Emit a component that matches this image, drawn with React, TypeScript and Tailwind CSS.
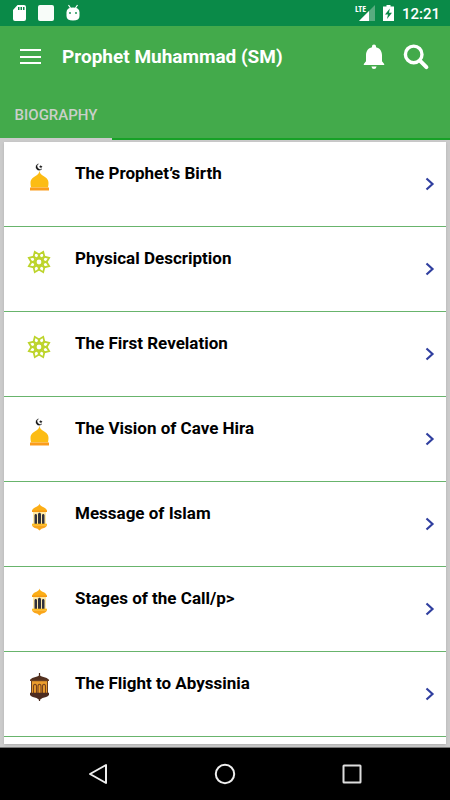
import React from "react";

type IconKind = "dome" | "rosette" | "lantern" | "darkLantern";

const topics: { title: string; icon: IconKind }[] = [
  { title: "The Prophet’s Birth", icon: "dome" },
  { title: "Physical Description", icon: "rosette" },
  { title: "The First Revelation", icon: "rosette" },
  { title: "The Vision of Cave Hira", icon: "dome" },
  { title: "Message of Islam", icon: "lantern" },
  { title: "Stages of the Call/p>", icon: "lantern" },
  { title: "The Flight to Abyssinia", icon: "darkLantern" },
];

const petals = [0, 45, 90, 135, 180, 225, 270, 315];

function Dome() {
  return (
    <svg viewBox="0 0 28 28" className="size-7 shrink-0" aria-hidden="true">
      <path d="M13.500 .8A3.300 3.300 0 1 0 17 5.800 2.800 2.800 0 1 1 13.500.8Z" fill="#111" stroke="#111" strokeWidth=".3" />
      <path d="m15.800 2 .5 1 1.200.1-.9.800.2 1.200-1-.6-1.100.6.3-1.200-.9-.800 1.200-.1Z" fill="#222" />
      <path d="M14.500 7.500c.3 2.300.9 3.500 2.800 4.700 3.200 2 6.200 3.500 6.200 7.800 0 1.700-.2 3-.6 4.500H6.100c-.4-1.500-.6-2.800-.6-4.500 0-4.300 3-5.800 6.200-7.800 1.900-1.200 2.500-2.400 2.800-4.700Z" fill="#fcbc14" />
      <path d="M5 24.500h19v3H5z" fill="#fb9c1c" />
    </svg>
  );
}

function Rosette() {
  return (
    <svg viewBox="0 0 28 28" className="size-7 shrink-0" aria-hidden="true" fill="none" stroke="#bdd42c">
      {petals.map((angle) => (
        <path key={angle} d="M14 10.200 10.900 7.200l3.100-4.200 3.100 4.200Z" strokeWidth="1.800" transform={`rotate(${angle + 22.5} 14 14)`} />
      ))}
      <circle cx="14" cy="14" r="3.600" strokeWidth="2.400" />
    </svg>
  );
}

function Lantern() {
  return (
    <svg viewBox="0 0 28 28" className="size-7 shrink-0" aria-hidden="true">
      <path d="M14.500 0.500c.3 1.600 1 2.200 3 3.200 2.800 1.100 4 2.200 4.500 4.300H7c.5-2.100 1.700-3.200 4.500-4.300 2-1 2.700-1.600 3-3.200Z" fill="#fcae16" />
      <path d="M7 7.500h15V9H7z" fill="#f49a12" />
      <path d="M8 9h13v12H8z" fill="#ffe9a6" />
      <path d="M9.500 21v-8.500c0-2 2.500-2 2.500 0V21Zm3.500 0v-9.500c0-2.300 3-2.300 3 0V21Zm4 0v-8.500c0-2 2.500-2 2.500 0V21Z" fill="#30313c" />
      <path d="M7 20.700h15v2H7z" fill="#fdbb1d" />
      <path d="M7 22.500h15c-1 2-3.100 2.700-5.500 3.300l-2 1.700-2-1.700C10.100 25.200 8 24.500 7 22.500Z" fill="#faa61a" />
    </svg>
  );
}

function DarkLantern() {
  return (
    <svg viewBox="0 0 28 28" className="size-7 shrink-0" aria-hidden="true">
      <path d="M14.500 0v4m0 20v4" stroke="#49281c" strokeWidth="1.200" />
      <path d="M14.500 1.500c.5 1.500 1.500 2 4 2.400 2.200.5 4.500 1.400 5.500 3.100H5c1-1.700 3.300-2.600 5.500-3.100 2.500-.4 3.500-.9 4-2.400Z" fill="#52301f" />
      <path d="M5 6.700h19V8H5zM6 8h17v12.500H6z" fill="#6a3f22" />
      <path d="M7 8.200h15V20H7z" fill="#ec9d2c" />
      <path d="M8.500 20v-6.500c0-3 3-3 3 0V20m1.500 0v-6.500c0-3 3-3 3 0V20m1.500 0v-6.500c0-3 3-3 3 0V20" fill="none" stroke="#7a431c" strokeWidth="1.100" />
      <path d="M5 19.800h19v2.300c-1.500 1.700-4 2.600-6.500 3l-3 1.900-3-1.900C9 24.700 6.500 23.800 5 22.100Z" fill="#4d2c20" />
    </svg>
  );
}

function TopicIcon({ kind }: { kind: IconKind }) {
  if (kind === "dome") return <Dome />;
  if (kind === "rosette") return <Rosette />;
  if (kind === "lantern") return <Lantern />;
  return <DarkLantern />;
}

function StatusBar() {
  return (
    <div className="flex h-[26px] shrink-0 items-center bg-[#0a8a48] pl-3 pr-2.5 text-white">
      <svg viewBox="0 0 14 16" className="h-4 w-3.5" aria-hidden="true">
        <path fillRule="evenodd" fill="#fff" d="M5.500 0H12q2 0 2 2v12q0 2-2 2H3q-2 0-2-2V5ZM6 2v3h1.500V2Zm2.500 0v3H10V2ZM11 2v3h1.500V2Z" />
      </svg>
      <div className="ml-3 size-4 rounded-xs bg-[#f8fcf9]" />
      <svg viewBox="0 0 14 18" className="ml-3 h-[18px] w-3.5" aria-hidden="true">
        <path d="m2.500 1 2 3m7-3-2 3" stroke="#fff" strokeWidth="1.200" />
        <path d="M.5 8.500Q.5 3.500 7 3.500t6.500 5V12q0 4.500-6.500 4.500T.5 12Z" fill="#fff" />
        <circle cx="4" cy="9" r=".9" fill="#0a8a48" />
        <circle cx="10" cy="9" r=".9" fill="#0a8a48" />
      </svg>
      <svg viewBox="0 0 24 26" className="ml-auto h-[26px] w-6" aria-label="LTE signal">
        <path d="M24 5v16H8Z" fill="#58ac80" />
        <path d="M18 11v10H8Z" fill="#fff" />
        <path d="M4 4h12v9H4z" fill="#0a8a48" />
        <text x="4" y="12" fill="#fff" fontSize="9" fontWeight="700" className="font-['Open_Sans_Condensed','Liberation_Sans_Narrow',sans-serif]">LTE</text>
      </svg>
      <svg viewBox="0 0 11 16" className="ml-2 h-4 w-[11px]" aria-hidden="true">
        <path d="M3.500 0h4v1.500H11V16H0V1.500h3.500Z" fill="#fff" />
        <path d="M6.800 3.500 2 9.500h3l-1 4.500 5-6.200H6Z" fill="#0a8a48" />
      </svg>
      <span className="ml-2 pt-0.5 text-[15px] leading-none font-medium">12:21</span>
    </div>
  );
}

function Toolbar() {
  return (
    <header className="flex h-[62px] shrink-0 items-center pl-[18px] pr-5 text-white">
      <button type="button" aria-label="Open menu" className="size-6">
        <svg viewBox="0 0 24 24" className="size-6" stroke="#fff" strokeWidth="2" aria-hidden="true">
          <path d="M2 5h21M2 12h21M2 18h21" />
        </svg>
      </button>
      <h1 className="ml-5 flex-1 truncate text-[19px] leading-6 font-bold">Prophet Muhammad (SM)</h1>
      <button type="button" aria-label="Notifications" className="size-7">
        <svg viewBox="0 0 28 28" className="size-7" fill="#fff" aria-hidden="true">
          <path d="M14 1.500c1.200 0 2 .8 2 2v.7c3.900.9 6 4 6 8v6l2.200 2.700V22H3.800v-1.100L6 18.200v-6c0-4 2.100-7.100 6-8v-.7c0-1.200.8-2 2-2ZM11.400 23.500h5.200q-.5 2.500-2.600 2.500t-2.600-2.500Z" />
        </svg>
      </button>
      <button type="button" aria-label="Search" className="ml-3.5 size-7">
        <svg viewBox="0 0 28 28" className="size-7" fill="none" stroke="#fff" aria-hidden="true">
          <circle cx="11.700" cy="11.400" r="8.300" strokeWidth="3.400" />
          <path d="m18.400 18.200 6 6" strokeWidth="4" strokeLinecap="round" />
        </svg>
      </button>
    </header>
  );
}

export default function App() {
  return (
    <div className="flex h-dvh flex-col overflow-hidden bg-[#cbcbcb] font-[Roboto,sans-serif]">
      <StatusBar />
      <div className="shrink-0 bg-[#43aa4b]">
        <Toolbar />
        <nav aria-label="Sections" className="flex h-[52px] border-b-2 border-[#16a126]">
          <button type="button" aria-current="page" className="-mb-0.5 w-28 border-b-2 border-[#cbcbcb] pt-1 text-[15px] font-medium text-[#c9d0c9]">
            BIOGRAPHY
          </button>
        </nav>
      </div>
      <main className="mx-1 mt-0.5 mb-[3px] min-h-0 flex-1 overflow-hidden bg-white shadow-sm">
        <ul>
          {topics.map((topic) => (
            <li key={topic.title}>
              <a href="#topic" className="flex h-[85px] items-start border-b border-[#68b46c] pl-[21px] pr-2.5 pt-[21px]">
                <TopicIcon kind={topic.icon} />
                <span className="ml-[22px] flex-1 text-[17px] leading-5 font-bold text-black">{topic.title}</span>
                <svg viewBox="0 0 12 14" className="mt-3.5 h-3.5 w-3" fill="none" stroke="#303f9f" strokeWidth="2.200" aria-hidden="true">
                  <path d="m2.500 1.500 6 5.500-6 5.500" />
                </svg>
              </a>
            </li>
          ))}
        </ul>
      </main>
      <footer className="flex h-[53px] shrink-0 items-center border-t border-[#777] bg-black px-[35px]">
        <button type="button" aria-label="Back" className="flex flex-1 justify-center">
          <svg viewBox="0 0 22 24" className="h-6 w-[22px]" fill="none" stroke="#eee" strokeWidth="2" strokeLinejoin="round" aria-hidden="true">
            <path d="M19 3v18L3 12Z" />
          </svg>
        </button>
        <button type="button" aria-label="Home" className="flex flex-1 justify-center">
          <svg viewBox="0 0 24 24" className="size-6" fill="none" stroke="#eee" strokeWidth="2" aria-hidden="true">
            <circle cx="12" cy="12" r="9.200" />
          </svg>
        </button>
        <button type="button" aria-label="Recent apps" className="flex flex-1 justify-center">
          <svg viewBox="0 0 24 24" className="size-6" fill="none" stroke="#ddd" strokeWidth="2" aria-hidden="true">
            <rect x="3.500" y="3.500" width="17" height="17" rx=".5" />
          </svg>
        </button>
      </footer>
    </div>
  );
}
